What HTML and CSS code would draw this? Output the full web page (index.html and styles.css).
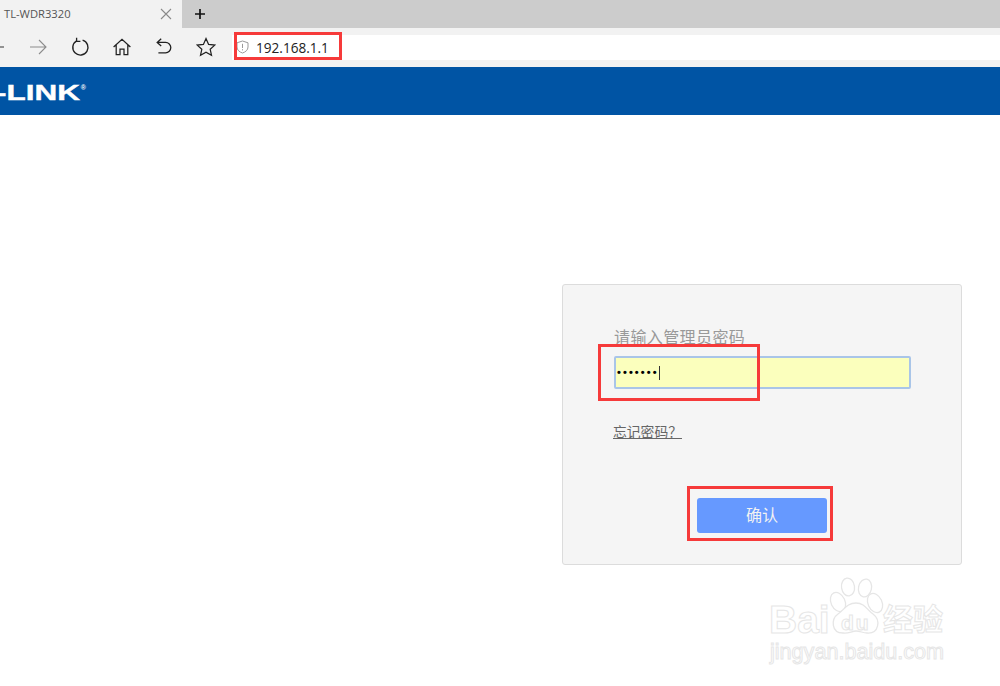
FILE: index.html
```html
<!DOCTYPE html>
<html lang="zh-CN">
<head>
<meta charset="utf-8">
<title>TL-WDR3320</title>
<link rel="stylesheet" href="styles.css">
</head>
<body>
<div class="tabstrip">
  <div class="tab">
    <span class="tab-title">TL-WDR3320</span>
    <svg class="tab-close" width="14" height="14" viewBox="0 0 14 14"><path d="M2 2L12 12M12 2L2 12" stroke="#8a8a8a" stroke-width="1.1" fill="none"/></svg>
  </div>
  <svg class="tab-new" width="12" height="12" viewBox="0 0 12 12"><path d="M6 1V11M1 6H11" stroke="#111" stroke-width="1.7" fill="none"/></svg>
</div>
<div class="toolbar">
  <span class="tool tool-back"><svg width="20" height="20" viewBox="0 0 20 20"><path d="M2 10H18M9 3L2 10L9 17" stroke="#333" stroke-width="1.2" fill="none"/></svg></span>
  <span class="tool"><svg width="20" height="20" viewBox="0 0 20 20"><path d="M2 10H18M11 3L18 10L11 17" stroke="#8c8c8c" stroke-width="1.1" fill="none"/></svg></span>
  <span class="tool"><svg width="20" height="20" viewBox="0 0 20 20"><path d="M6.6 3.9A7.6 7.6 0 1 0 12.6 3.2" stroke="#222" stroke-width="1.4" fill="none"/><path d="M6.6 0.8V4.4H10.4" stroke="#222" stroke-width="1.3" fill="none"/></svg></span>
  <span class="tool"><svg width="20" height="20" viewBox="0 0 20 20"><path d="M1.6 10L10 2.4L18.4 10M4.2 8V17.6H8V12H12V17.6H15.8V8" stroke="#222" stroke-width="1.25" fill="none"/></svg></span>
  <span class="tool"><svg width="20" height="20" viewBox="0 0 20 20"><path d="M7.2 1.8L3.2 5.4L7.2 9M3.4 5.4H11.6A5.2 5.2 0 0 1 11.6 15.8H4.4" stroke="#222" stroke-width="1.3" fill="none"/></svg></span>
  <span class="tool"><svg width="20" height="20" viewBox="0 0 20 20"><path d="M10 1.6L12.6 7.4L18.8 8.1L14.2 12.3L15.5 18.4L10 15.3L4.5 18.4L5.8 12.3L1.2 8.1L7.4 7.4Z" stroke="#222" stroke-width="1.25" fill="none"/></svg></span>
  <div class="address">
    <svg class="shield" width="13" height="14" viewBox="0 0 13 14"><path d="M6.5 1L12 2.8V7C12 10 9.6 12 6.5 13C3.4 12 1 10 1 7V2.8Z" stroke="#9a9a9a" stroke-width="1" fill="none"/><path d="M6.5 3.8V8M6.5 9.2V10.4" stroke="#9a9a9a" stroke-width="1" fill="none"/></svg>
    <span class="url">192.168.1.1</span>
  </div>
</div>
<header class="brandbar"><span class="brand">-LINK</span><sup class="brand-mark">®</sup></header>
<main class="main">
  <form class="card">
    <div class="card-label">请输入管理员密码</div>
    <div class="field"><span class="dots">•••••••</span><span class="caret"></span></div>
    <a class="forgot">忘记密码？</a>
    <div class="actions"><span class="confirm">确认</span></div>
  </form>
</main>
<div class="mark mark-url"></div>
<div class="mark mark-field"></div>
<div class="mark mark-button"></div>
<div class="watermark">
  <span class="wm-bai">Bai</span>
  <svg class="wm-paw" width="70" height="64" viewBox="0 0 70 64" fill="#fff" stroke="#e6e6e6" stroke-width="1.3">
    <ellipse cx="15" cy="26" rx="7" ry="10" transform="rotate(-25 15 26)"/>
    <ellipse cx="25" cy="11" rx="6.5" ry="9" transform="rotate(-8 25 11)"/>
    <ellipse cx="42" cy="12" rx="6.5" ry="9" transform="rotate(12 42 12)"/>
    <ellipse cx="52" cy="27" rx="7" ry="10" transform="rotate(-25 52 27)"/>
    <path d="M33 27C42 27 44 34 50 38C58 44 56 58 44 57C40 57 37 55 33 55C29 55 25 58 20 57C8 57 8 43 15 38C21 34 24 27 33 27Z"/>
  </svg>
  <span class="wm-du">du</span>
  <span class="wm-cn">经验</span>
  <span class="wm-site">jingyan.baidu.com</span>
</div>
</body>
</html>
```
FILE: styles.css
```css
* { box-sizing: border-box; }
html, body { margin: 0; padding: 0; }
body {
  width: 1000px;
  height: 686px;
  overflow: hidden;
  position: relative;
  background: #fff;
  font-family: "Noto Sans CJK SC", "Liberation Sans", sans-serif;
}
.tabstrip {
  height: 28px;
  background: #cccccc;
  display: flex;
  align-items: center;
}
.tab {
  width: 182px;
  height: 28px;
  background: #f2f2f2;
  display: flex;
  align-items: center;
  justify-content: space-between;
  padding: 0 9px 1px 4px;
}
.tab-title {
  font: 11.2px "Open Sans", "Liberation Sans", sans-serif;
  color: #555;
}
.tab-new { margin-left: 12px; }
.toolbar {
  height: 39px;
  background: #f2f2f2;
  display: flex;
  align-items: center;
  overflow: hidden;
  padding-bottom: 1px;
}
.tool {
  flex: none;
  width: 42px;
  height: 24px;
  display: flex;
  align-items: center;
  justify-content: center;
}
.tool-back { margin-left: -25px; }
.address {
  flex: 1;
  height: 25px;
  margin-left: 5px;
  background: #fff;
  display: flex;
  align-items: center;
  padding-left: 4px;
}
.shield { flex: none; }
.url {
  margin-left: 7px;
  font: 13.6px "Open Sans", "Liberation Sans", sans-serif;
  color: #222;
}
.brandbar {
  height: 48px;
  background: #0054a4;
  color: #fff;
  display: flex;
  align-items: center;
  overflow: hidden;
}
.brand {
  display: inline-block;
  margin: 3px 0 0 -4px;
  font: 700 22px/1 "Liberation Sans", sans-serif;
  -webkit-text-stroke: .4px #fff;
  transform: scaleX(1.43);
  transform-origin: left center;
}
.brand-mark {
  font: 700 7px/1 "Liberation Sans", sans-serif;
  margin: 0 0 8px 26px;
}
.main { padding: 169px 0 0 562px; }
.card {
  width: 400px;
  height: 281px;
  background: #f5f5f5;
  border: 1px solid #dcdcdc;
  border-radius: 3px;
  padding: 40px 0 0 51px;
  display: flex;
  flex-direction: column;
}
.card-label {
  font-size: 16px;
  line-height: 22px;
  letter-spacing: .4px;
  color: #999;
  height: 31px;
}
.field {
  width: 297px;
  height: 33px;
  background: #fbffbd;
  border: 2px solid #a9c5e8;
  border-radius: 2px;
  display: flex;
  align-items: center;
  padding-left: 1px;
}
.dots {
  font: 700 11px/1 "Liberation Sans", sans-serif;
  letter-spacing: 2.1px;
  color: #000;
}
.caret { width: 1px; height: 14px; background: #333; margin-left: 0; }
.forgot {
  align-self: flex-start;
  margin: 32px 0 0 -1px;
  font-size: 13.8px;
  line-height: 20px;
  color: #666;
  text-decoration: underline;
}
.actions { padding: 57px 0 0 83px; }
.confirm {
  display: flex;
  align-items: center;
  justify-content: center;
  width: 130px;
  height: 35px;
  padding-bottom: 3px;
  background: #6699ff;
  border-radius: 3px;
  color: #f2f2f2;
  font-size: 16px;
}
.mark { position: absolute; border: 3px solid #f63a3a; }
.mark-url { left: 234px; top: 32px; width: 108px; height: 28px; }
.mark-field { left: 598px; top: 344px; width: 162px; height: 57px; }
.mark-button { left: 687px; top: 486px; width: 146px; height: 55px; }
.watermark {
  position: absolute;
  left: 750px;
  top: 570px;
  width: 220px;
  height: 100px;
  color: #fff;
  -webkit-text-stroke: 1px #e6e6e6;
}
.wm-bai, .wm-du, .wm-cn, .wm-site, .wm-paw { position: absolute; }
.wm-bai { left: 19px; top: 30px; font: 700 39px/1 "Liberation Sans", sans-serif; }
.wm-paw { left: 73px; top: 6px; }
.wm-du { left: 91px; top: 42px; font: 700 21px/1 "Liberation Sans", sans-serif; letter-spacing: 2px; }
.wm-cn { left: 133px; top: 32px; font: 700 30px/1 "Noto Sans CJK SC", sans-serif; }
.wm-site { left: 20px; top: 71px; font: 400 21.6px/1 "Liberation Sans", sans-serif; }
```
